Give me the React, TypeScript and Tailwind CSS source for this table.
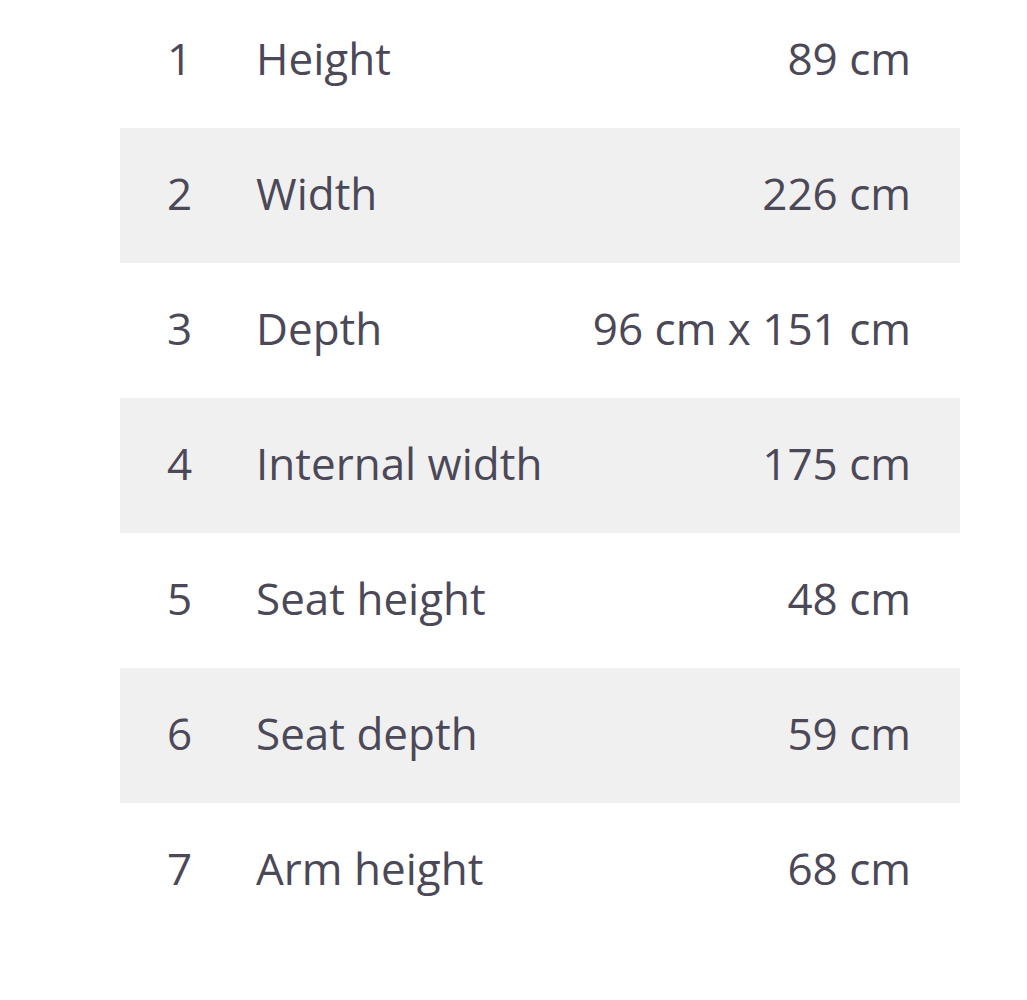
const rows = [
  { n: 1, label: 'Height', value: '89 cm' },
  { n: 2, label: 'Width', value: '226 cm' },
  { n: 3, label: 'Depth', value: '96 cm x 151 cm' },
  { n: 4, label: 'Internal width', value: '175 cm' },
  { n: 5, label: 'Seat height', value: '48 cm' },
  { n: 6, label: 'Seat depth', value: '59 cm' },
  { n: 7, label: 'Arm height', value: '68 cm' },
]

export default function App() {
  return (
    <div className="h-[1000px] w-full overflow-hidden bg-white">
      <div
        className="mt-[-7px] ml-[120px] w-[840px] text-[#4b4857] text-[44px]"
        style={{ fontFamily: '"Open Sans", "Liberation Sans", sans-serif' }}
      >
        {rows.map((r, i) => (
          <div
            key={r.n}
            className={`flex h-[135px] items-center pb-[5px] ${i % 2 === 1 ? 'bg-[#f0f0f1]' : 'bg-white'}`}
          >
            <span className="w-[136px] shrink-0 pl-[47px]">{r.n}</span>
            <span className="flex-1">{r.label}</span>
            <span className="pr-[49px] text-right">{r.value}</span>
          </div>
        ))}
      </div>
    </div>
  )
}
